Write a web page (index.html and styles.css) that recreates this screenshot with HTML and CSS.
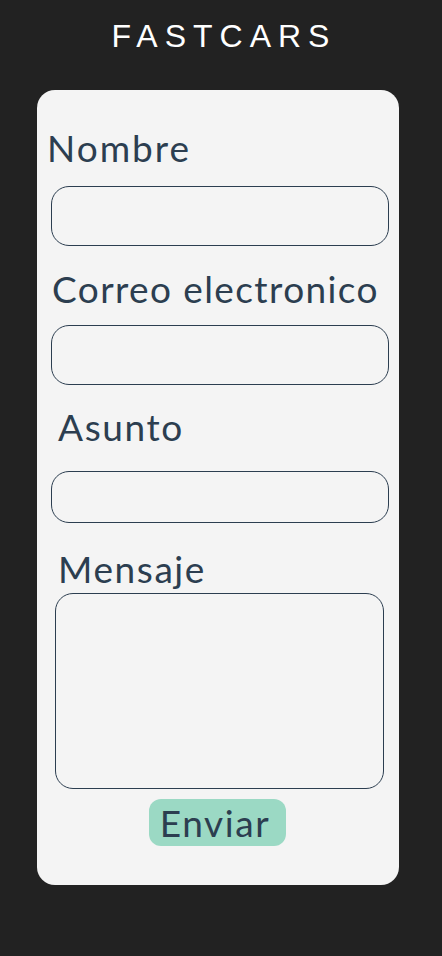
FILE: index.html
```html
<!DOCTYPE html>
<html lang="es">
<head>
<meta charset="utf-8">
<title>FastCars - Contacto</title>
<link rel="stylesheet" href="styles.css">
</head>
<body>
<header class="top">
  <h1 class="brand">FASTCARS</h1>
</header>
<main class="card">
  <form class="form">
    <label class="label label-nombre" for="nombre">Nombre</label>
    <input class="field field-nombre" id="nombre" type="text">
    <label class="label label-correo" for="correo">Correo electronico</label>
    <input class="field field-correo" id="correo" type="email">
    <label class="label label-asunto" for="asunto">Asunto</label>
    <input class="field field-asunto" id="asunto" type="text">
    <label class="label label-mensaje" for="mensaje">Mensaje</label>
    <textarea class="area" id="mensaje"></textarea>
    <button class="send" type="button">Enviar</button>
  </form>
</main>
</body>
</html>
```
FILE: styles.css
```css
* { box-sizing: border-box; }
html, body { margin: 0; padding: 0; }
body {
  background: #222222;
  font-family: "Lato", "Open Sans", sans-serif;
  color: #2c3e50;
  width: 442px;
  height: 956px;
}
.top {
  padding-top: 16px;
  height: 90px;
}
.brand {
  margin: 0;
  text-align: center;
  font-family: "Liberation Sans", Arial, sans-serif;
  font-weight: 400;
  font-size: 32px;
  line-height: 40px;
  letter-spacing: 7px;
  color: #ffffff;
  padding-left: 6px;
}
.card {
  margin-left: 37px;
  width: 362px;
  height: 795px;
  background: #f4f4f4;
  border-radius: 18px;
  padding-top: 36px;
}
.form {
  display: flex;
  flex-direction: column;
  align-items: flex-start;
}
.label {
  font-size: 37px;
  line-height: 44px;
  height: 44px;
  letter-spacing: 1.6px;
}
.label-nombre { margin-left: 10px; letter-spacing: 2px; }
.label-correo { margin-left: 15px; margin-top: 21px; letter-spacing: 1.4px; }
.label-asunto { margin-left: 21px; margin-top: 20px; }
.label-mensaje { margin-left: 21px; margin-top: 24px; }
.field {
  margin-left: 14px;
  width: 338px;
  border: 1px solid #2c3e50;
  border-radius: 18px;
  background: transparent;
  font: inherit;
}
.field-nombre { height: 60px; margin-top: 16px; }
.field-correo { height: 60px; margin-top: 14px; }
.field-asunto { height: 52px; margin-top: 22px; }
.area {
  margin-left: 18px;
  margin-top: 2px;
  width: 329px;
  height: 196px;
  border: 1px solid #2c3e50;
  border-radius: 18px;
  background: transparent;
  resize: none;
  font: inherit;
}
.send {
  align-self: center;
  margin-top: 10px;
  margin-right: 2px;
  width: 137px;
  height: 47px;
  border: none;
  border-radius: 12px;
  background: #9bd9c4;
  color: #2c3e50;
  font-family: "Lato", sans-serif;
  font-size: 37px;
  line-height: 47px;
  letter-spacing: 1.6px;
  padding: 0 4px 0 0;
}
```
